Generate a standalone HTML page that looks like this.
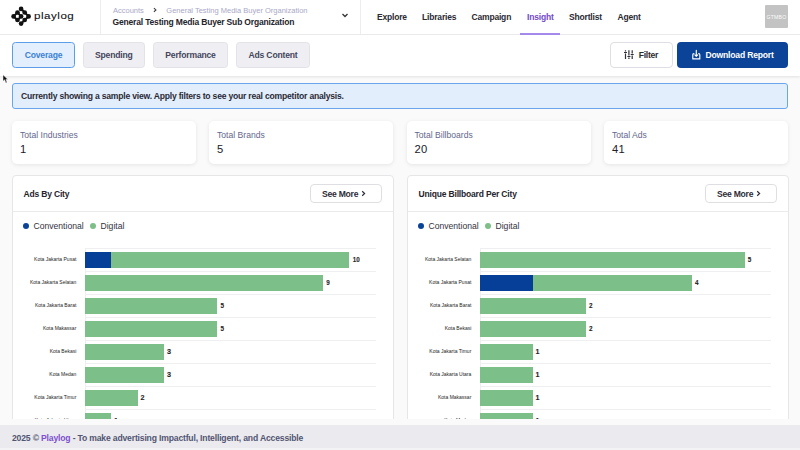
<!DOCTYPE html>
<html><head><meta charset="utf-8">
<style>
*{box-sizing:border-box;margin:0;padding:0}
html,body{width:800px;height:450px;overflow:hidden}
body{font-family:"Liberation Sans",sans-serif;background:#fafafa;position:relative;color:#2b2b36}
.abs{position:absolute}
#hdr{left:0;top:0;width:800px;height:35px;background:#fff;border-bottom:1px solid #ececf1}
.vdiv{top:0;width:1px;height:34px;background:#ededf1}
.logo-t{left:34.3px;top:9.6px;font-size:9.9px;color:#0e0e12;letter-spacing:0.45px;-webkit-text-stroke:0.08px #0e0e12;transform:scaleX(1.17);transform-origin:0 0}
.bc{left:113px;top:6px;font-size:7.5px;color:#a9a9c6;white-space:nowrap}
.ttl{left:112.5px;top:16.6px;font-size:8.5px;letter-spacing:-0.17px;font-weight:700;color:#24242c;white-space:nowrap}
.nav{top:12px;font-size:8.5px;letter-spacing:-0.18px;font-weight:700;color:#2a2a33;white-space:nowrap}
#tb{left:0;top:35px;width:800px;height:41px;background:#fff;box-shadow:0 1px 2.5px rgba(0,0,0,0.1)}
.tab{top:42px;height:26px;border-radius:3.5px;background:#efeff3;border:1px solid #e2e2e8;font-size:8.6px;letter-spacing:-0.2px;font-weight:700;color:#45455c;display:flex;align-items:center;justify-content:center;white-space:nowrap}
.tab.on{background:#e3effc;border:1px solid #5c9de8;color:#3b82d6}
.btn{top:42px;height:26px;border-radius:4px;display:flex;align-items:center;justify-content:center;font-size:8.6px;letter-spacing:-0.25px;font-weight:700;white-space:nowrap}
#banner{left:12px;top:83px;width:776px;height:26px;background:#e2eefc;border:1px solid #6aa6ec;border-radius:3px;font-size:8.6px;letter-spacing:-0.215px;font-weight:700;color:#2a2a36;padding-left:8px;display:flex;align-items:center}
.card{top:121px;height:43px;background:#fff;border-radius:5px;box-shadow:0 1px 4px rgba(0,0,0,0.09)}
.card .l{position:absolute;left:8px;top:9px;font-size:8.6px;color:#64678c;white-space:nowrap}
.card .v{position:absolute;left:8px;top:22px;font-size:11.2px;color:#202028;letter-spacing:0.3px}
.panel{top:175px;width:381.5px;height:260px;background:#fff;border:1px solid #e6e6e8;border-radius:4px;overflow:hidden}
.panel .ph{position:absolute;left:0;top:0;width:100%;height:36px;border-bottom:1px solid #ebebed}
.panel .pt{position:absolute;left:10.5px;top:12.5px;font-size:8.5px;letter-spacing:-0.17px;font-weight:700;color:#24242c;white-space:nowrap}
.sm{position:absolute;top:8px;width:72px;height:19px;border:1px solid #dfdfe3;border-radius:4px;font-size:8.6px;letter-spacing:-0.25px;font-weight:700;color:#2d2d38;display:flex;align-items:center;justify-content:flex-start;padding-left:11.5px;white-space:nowrap}
.lg{position:absolute;top:45px;font-size:8.6px;color:#33333d;white-space:nowrap}
.dot{position:absolute;width:6px;height:6px;border-radius:50%}
.clab{font-size:5px;color:#1e1e24;white-space:nowrap;text-align:right}
.vlab{font-weight:700;color:#1f1f25;white-space:nowrap;-webkit-text-stroke:0.1px #1f1f25}
#footer{left:0;top:425px;width:800px;height:25px;background:#ebebef;font-size:8.6px;letter-spacing:-0.17px;font-weight:700;color:#525572;padding-left:12px;display:flex;align-items:center;white-space:nowrap}
</style></head>
<body>
<div id="hdr" class="abs">
  <svg class="abs" style="left:8px;top:6px" width="26" height="21" viewBox="8 6 26 21">
    <g stroke="#111" stroke-width="2" fill="none" stroke-linecap="round">
      <path d="M21.1 8.9 L24.7 12.5 L28.6 16.4 L24.7 20 L21.1 23.6"/>
      <path d="M17.5 12.5 L13.6 16.4 L17.5 20 L21.1 16.4 Z"/>
    </g>
    <g fill="#111">
      <circle cx="21.1" cy="8.9" r="2.35"/><circle cx="17.5" cy="12.5" r="2.35"/><circle cx="24.7" cy="12.5" r="2.35"/>
      <circle cx="13.6" cy="16.4" r="2.35"/><circle cx="21.1" cy="16.4" r="2.35"/><circle cx="28.6" cy="16.4" r="2.35"/>
      <circle cx="17.5" cy="20" r="2.35"/><circle cx="24.7" cy="20" r="2.35"/><circle cx="21.1" cy="23.6" r="2.35"/>
    </g>
  </svg>
  <div class="abs logo-t">playlog</div>
  <div class="abs vdiv" style="left:100px"></div>
  <div class="abs bc">Accounts</div>
  <svg class="abs" style="left:152px;top:7px" width="6" height="6" viewBox="0 0 6 6"><path d="M1.9 1.1 L3.9 2.95 L1.9 4.8" stroke="#3a3a44" stroke-width="1.1" fill="none"/></svg>
  <div class="abs bc" style="left:166.3px">General Testing Media Buyer Organization</div>
  <div class="abs ttl">General Testing Media Buyer Sub Organization</div>
  <svg class="abs" style="left:341px;top:12px" width="8" height="7" viewBox="0 0 8 7"><path d="M1.5 2 L4 4.5 L6.5 2" stroke="#333" stroke-width="1.3" fill="none"/></svg>
  <div class="abs vdiv" style="left:360px"></div>
  <div class="abs nav" style="left:377px">Explore</div>
  <div class="abs nav" style="left:422px">Libraries</div>
  <div class="abs nav" style="left:471.5px">Campaign</div>
  <div class="abs nav" style="left:527px;color:#7249c9">Insight</div>
  <div class="abs" style="left:520px;top:33px;width:40px;height:1.8px;background:#a58aee"></div>
  <div class="abs nav" style="left:569px">Shortlist</div>
  <div class="abs nav" style="left:617.5px">Agent</div>
  <div class="abs" style="left:765px;top:5px;width:23px;height:23px;background:#c3c3c3;border-radius:1px;color:#fbfbfb;font-size:5.2px;font-weight:400;letter-spacing:0.15px;display:flex;align-items:center;justify-content:center">GTMBO</div>
</div>

<div id="tb" class="abs"></div>
<div class="abs tab on" style="left:12px;width:63px">Coverage</div>
<div class="abs tab" style="left:82.5px;width:62.5px">Spending</div>
<div class="abs tab" style="left:153px;width:75px">Performance</div>
<div class="abs tab" style="left:236px;width:74px">Ads Content</div>
<div class="abs btn" style="left:609.5px;width:63px;background:#fff;border:1px solid #dedee4;color:#2a2a33;justify-content:flex-start;padding-left:28.2px">Filter</div>
<svg class="abs" style="left:620px;top:46px" width="20" height="16" viewBox="620 46 20 16"><g stroke="#2f2f36" stroke-width="1.2" fill="none">
<path d="M625.5 50.3v1.3M625.5 53.4v5.5M628.9 50.3v5.3M628.9 57.4v1.5M632.2 50.3v3.3M632.2 55.4v3.5"/></g>
<g stroke="#2f2f36" stroke-width="1.15"><path d="M624 52.5h3M627.4 56.5h3M630.7 54.5h3"/></g></svg>
<div class="abs btn" style="left:677px;width:111px;background:#0a4398;color:#fff;justify-content:flex-start;padding-left:28.5px;font-size:8.6px;letter-spacing:-0.2px">Download Report</div>
<svg class="abs" style="left:688px;top:47px" width="16" height="15" viewBox="688 47 16 15"><g stroke="#fff" stroke-width="1.15" fill="none" stroke-linecap="round" stroke-linejoin="round">
<path d="M693.9 53.6 Q692.8 53.6 692.8 54.8 V58.9 H699.8 V54.8 Q699.8 53.6 698.7 53.6"/>
<path d="M696.3 50.2 V56.3 M694.9 54.9 L696.3 56.3 L697.7 54.9"/></g></svg>
<svg class="abs" style="left:0;top:70px" width="12" height="16" viewBox="0 70 12 16"><path d="M3 74.8 L3 81.3 L4.6 79.8 L5.9 82.9 L7.1 82.4 L5.9 79.4 L7.9 79.4 Z" fill="#111" stroke="#fff" stroke-width="0.5" stroke-linejoin="round"/></svg>

<div id="banner" class="abs">Currently showing a sample view. Apply filters to see your real competitor analysis.</div>

<div class="abs card" style="left:12px;width:184px"><div class="l">Total Industries</div><div class="v">1</div></div>
<div class="abs card" style="left:209px;width:184px"><div class="l">Total Brands</div><div class="v">5</div></div>
<div class="abs card" style="left:406.5px;width:184px"><div class="l">Total Billboards</div><div class="v">20</div></div>
<div class="abs card" style="left:604px;width:184px"><div class="l">Total Ads</div><div class="v">41</div></div>

<div class="abs panel" style="left:12px">
  <div class="ph"></div>
  <div class="pt">Ads By City</div>
  <div class="sm" style="left:296.5px">See More<svg style="display:block;margin-left:2.5px" width="5" height="7" viewBox="0 0 5 7"><path d="M1.2 1.2 L3.6 3.5 L1.2 5.8" stroke="#2d2d38" stroke-width="1.2" fill="none"/></svg></div>
  <div class="dot" style="left:10px;top:47px;background:#0a4398"></div>
  <div class="lg" style="left:20.5px">Conventional</div>
  <div class="dot" style="left:77px;top:47px;background:#7dbf87"></div>
  <div class="lg" style="left:87.5px">Digital</div>
  <div id="c1"></div>
</div>
<div class="abs panel" style="left:407px">
  <div class="ph"></div>
  <div class="pt">Unique Billboard Per City</div>
  <div class="sm" style="left:296.5px">See More<svg style="display:block;margin-left:2.5px" width="5" height="7" viewBox="0 0 5 7"><path d="M1.2 1.2 L3.6 3.5 L1.2 5.8" stroke="#2d2d38" stroke-width="1.2" fill="none"/></svg></div>
  <div class="dot" style="left:10px;top:47px;background:#0a4398"></div>
  <div class="lg" style="left:20.5px">Conventional</div>
  <div class="dot" style="left:77px;top:47px;background:#7dbf87"></div>
  <div class="lg" style="left:87.5px">Digital</div>
  <div id="c2"></div>
</div>

<!--CHARTS-->
<div class="abs" style="left:0;top:212px;width:800px;height:207.5px;overflow:hidden;pointer-events:none">
<div class="abs" style="left:84.50px;top:36.40px;width:1px;height:207.00px;background:#efeff2"></div>
<div class="abs" style="left:85.00px;top:36.40px;width:291.00px;height:1px;background:#efeff2"></div>
<div class="abs" style="left:85.00px;top:59.40px;width:291.00px;height:1px;background:#efeff2"></div>
<div class="abs" style="left:85.00px;top:82.40px;width:291.00px;height:1px;background:#efeff2"></div>
<div class="abs" style="left:85.00px;top:105.40px;width:291.00px;height:1px;background:#efeff2"></div>
<div class="abs" style="left:85.00px;top:128.40px;width:291.00px;height:1px;background:#efeff2"></div>
<div class="abs" style="left:85.00px;top:151.40px;width:291.00px;height:1px;background:#efeff2"></div>
<div class="abs" style="left:85.00px;top:174.40px;width:291.00px;height:1px;background:#efeff2"></div>
<div class="abs" style="left:85.00px;top:197.40px;width:291.00px;height:1px;background:#efeff2"></div>
<div class="abs" style="left:85.00px;top:220.40px;width:291.00px;height:1px;background:#efeff2"></div>
<div class="abs" style="left:85.00px;top:243.40px;width:291.00px;height:1px;background:#efeff2"></div>
<div class="abs clab" style="right:723.70px;top:44.20px">Kota Jakarta Pusat</div>
<div class="abs" style="left:85.00px;top:40.00px;width:26.45px;height:16px;background:#063f98"></div>
<div class="abs" style="left:111.45px;top:40.00px;width:238.05px;height:16px;background:#7dbf88"></div>
<div class="abs vlab" style="left:352.80px;top:44.35px;font-size:6.3px">10</div>
<div class="abs clab" style="right:723.70px;top:67.20px">Kota Jakarta Selatan</div>
<div class="abs" style="left:85.00px;top:63.00px;width:238.05px;height:16px;background:#7dbf88"></div>
<div class="abs vlab" style="left:326.35px;top:67.35px;font-size:6.3px">9</div>
<div class="abs clab" style="right:723.70px;top:90.20px">Kota Jakarta Barat</div>
<div class="abs" style="left:85.00px;top:86.00px;width:132.25px;height:16px;background:#7dbf88"></div>
<div class="abs vlab" style="left:220.55px;top:90.35px;font-size:6.3px">5</div>
<div class="abs clab" style="right:723.70px;top:113.20px">Kota Makassar</div>
<div class="abs" style="left:85.00px;top:109.00px;width:132.25px;height:16px;background:#7dbf88"></div>
<div class="abs vlab" style="left:220.55px;top:113.35px;font-size:6.3px">5</div>
<div class="abs clab" style="right:723.70px;top:136.20px">Kota Bekasi</div>
<div class="abs" style="left:85.00px;top:132.00px;width:79.35px;height:16px;background:#7dbf88"></div>
<div class="abs vlab" style="left:166.95px;top:135.12px;font-size:7.2px">3</div>
<div class="abs clab" style="right:723.70px;top:159.20px">Kota Medan</div>
<div class="abs" style="left:85.00px;top:155.00px;width:79.35px;height:16px;background:#7dbf88"></div>
<div class="abs vlab" style="left:166.95px;top:158.12px;font-size:7.2px">3</div>
<div class="abs clab" style="right:723.70px;top:182.20px">Kota Jakarta Timur</div>
<div class="abs" style="left:85.00px;top:178.00px;width:52.90px;height:16px;background:#7dbf88"></div>
<div class="abs vlab" style="left:140.50px;top:181.12px;font-size:7.2px">2</div>
<div class="abs clab" style="right:723.70px;top:205.20px">Kota Jakarta Utara</div>
<div class="abs" style="left:85.00px;top:201.00px;width:26.45px;height:16px;background:#7dbf88"></div>
<div class="abs vlab" style="left:114.05px;top:204.12px;font-size:7.2px">1</div>
</div>
<div class="abs" style="left:0;top:212px;width:800px;height:207.5px;overflow:hidden;pointer-events:none">
<div class="abs" style="left:479.50px;top:36.40px;width:1px;height:207.00px;background:#efeff2"></div>
<div class="abs" style="left:480.00px;top:36.40px;width:291.00px;height:1px;background:#efeff2"></div>
<div class="abs" style="left:480.00px;top:59.40px;width:291.00px;height:1px;background:#efeff2"></div>
<div class="abs" style="left:480.00px;top:82.40px;width:291.00px;height:1px;background:#efeff2"></div>
<div class="abs" style="left:480.00px;top:105.40px;width:291.00px;height:1px;background:#efeff2"></div>
<div class="abs" style="left:480.00px;top:128.40px;width:291.00px;height:1px;background:#efeff2"></div>
<div class="abs" style="left:480.00px;top:151.40px;width:291.00px;height:1px;background:#efeff2"></div>
<div class="abs" style="left:480.00px;top:174.40px;width:291.00px;height:1px;background:#efeff2"></div>
<div class="abs" style="left:480.00px;top:197.40px;width:291.00px;height:1px;background:#efeff2"></div>
<div class="abs" style="left:480.00px;top:220.40px;width:291.00px;height:1px;background:#efeff2"></div>
<div class="abs" style="left:480.00px;top:243.40px;width:291.00px;height:1px;background:#efeff2"></div>
<div class="abs clab" style="right:328.70px;top:44.20px">Kota Jakarta Selatan</div>
<div class="abs" style="left:480.00px;top:40.00px;width:264.50px;height:16px;background:#7dbf88"></div>
<div class="abs vlab" style="left:747.80px;top:44.35px;font-size:6.3px">5</div>
<div class="abs clab" style="right:328.70px;top:67.20px">Kota Jakarta Pusat</div>
<div class="abs" style="left:480.00px;top:63.00px;width:52.90px;height:16px;background:#063f98"></div>
<div class="abs" style="left:532.90px;top:63.00px;width:158.70px;height:16px;background:#7dbf88"></div>
<div class="abs vlab" style="left:694.90px;top:67.35px;font-size:6.3px">4</div>
<div class="abs clab" style="right:328.70px;top:90.20px">Kota Jakarta Barat</div>
<div class="abs" style="left:480.00px;top:86.00px;width:105.80px;height:16px;background:#7dbf88"></div>
<div class="abs vlab" style="left:589.10px;top:90.35px;font-size:6.3px">2</div>
<div class="abs clab" style="right:328.70px;top:113.20px">Kota Bekasi</div>
<div class="abs" style="left:480.00px;top:109.00px;width:105.80px;height:16px;background:#7dbf88"></div>
<div class="abs vlab" style="left:589.10px;top:113.35px;font-size:6.3px">2</div>
<div class="abs clab" style="right:328.70px;top:136.20px">Kota Jakarta Timur</div>
<div class="abs" style="left:480.00px;top:132.00px;width:52.90px;height:16px;background:#7dbf88"></div>
<div class="abs vlab" style="left:535.50px;top:135.12px;font-size:7.2px">1</div>
<div class="abs clab" style="right:328.70px;top:159.20px">Kota Jakarta Utara</div>
<div class="abs" style="left:480.00px;top:155.00px;width:52.90px;height:16px;background:#7dbf88"></div>
<div class="abs vlab" style="left:535.50px;top:158.12px;font-size:7.2px">1</div>
<div class="abs clab" style="right:328.70px;top:182.20px">Kota Makassar</div>
<div class="abs" style="left:480.00px;top:178.00px;width:52.90px;height:16px;background:#7dbf88"></div>
<div class="abs vlab" style="left:535.50px;top:181.12px;font-size:7.2px">1</div>
<div class="abs clab" style="right:328.70px;top:205.20px">Kota Medan</div>
<div class="abs" style="left:480.00px;top:201.00px;width:52.90px;height:16px;background:#7dbf88"></div>
<div class="abs vlab" style="left:535.50px;top:204.12px;font-size:7.2px">1</div>
</div>
<!--/CHARTS-->
<div class="abs" style="left:0;top:419px;width:800px;height:6px;background:#fafafa"></div>
<div id="footer" class="abs">2025 ©&nbsp;<span style="color:#7d4fd0">Playlog</span>&nbsp;- To make advertising Impactful, Intelligent, and Accessible</div>
<div class="abs" style="left:0;top:448px;width:800px;height:2px;background:#f3f3f5"></div>
</body></html>
